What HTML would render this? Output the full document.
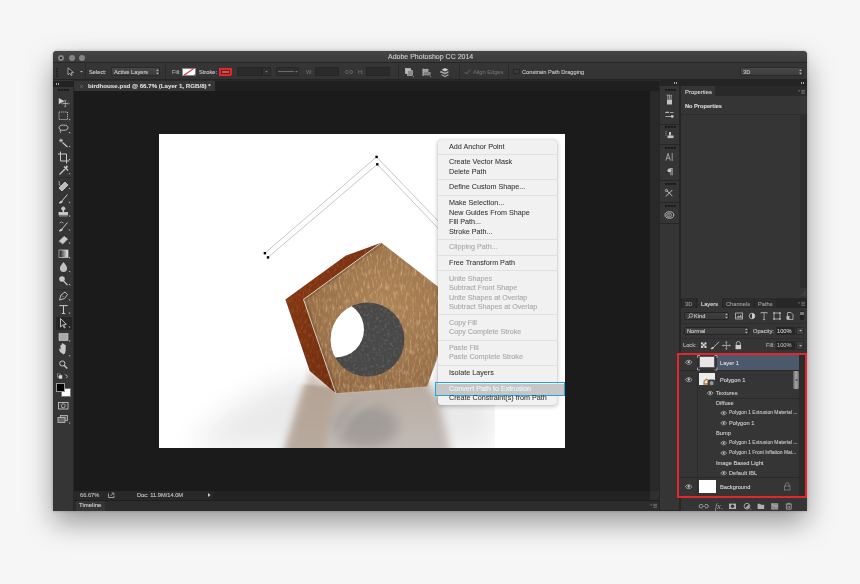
<!DOCTYPE html>
<html><head><meta charset="utf-8">
<style>
*{margin:0;padding:0;box-sizing:border-box}
html,body{width:860px;height:584px;overflow:hidden;background:#f6f6f6;font-family:"Liberation Sans",sans-serif}
.a{position:absolute}
.t{position:absolute;white-space:nowrap;color:#c4c4c4;font-size:5.7px;line-height:8px;-webkit-text-stroke:0.12px currentColor;will-change:transform}
svg{position:absolute;overflow:visible}
</style></head>
<body>
<!-- window shadow + base -->
<div class="a" style="left:53px;top:51px;width:754px;height:459.6px;background:#2b2b2b;border-radius:4px 4px 0 0;box-shadow:0 12px 28px rgba(0,0,0,.38),0 0 3px rgba(0,0,0,.25)"></div>

<!-- TITLE BAR -->
<div class="a" style="left:53px;top:51px;width:754px;height:11px;background:linear-gradient(#464646,#3b3b3b);border-radius:4px 4px 0 0"></div>
<div class="a" style="left:58px;top:55px;width:6.4px;height:6.4px;border-radius:50%;background:#858585"></div>
<div class="a" style="left:60.3px;top:57.3px;width:1.7px;height:1.7px;border-radius:50%;background:#2a2a2a"></div>
<div class="a" style="left:68.5px;top:55px;width:6.4px;height:6.4px;border-radius:50%;background:#858585"></div>
<div class="a" style="left:79px;top:55px;width:6.4px;height:6.4px;border-radius:50%;background:#858585"></div>
<div class="t" style="left:387.5px;top:53.3px;font-size:7px;color:#cdcdcd">Adobe Photoshop CC 2014</div>

<!-- OPTIONS BAR -->
<div class="a" style="left:53px;top:62px;width:754px;height:18px;background:linear-gradient(#363636,#333333);border-top:1px solid #262626;border-bottom:1px solid #242424"></div>


<!-- options bar content -->
<svg style="left:55.8px;top:68px" width="2" height="9"><path d="M0 0h1.6v1.6h-1.6zM0 2.6h1.6v1.6h-1.6zM0 5.2h1.6v1.6h-1.6zM0 7.8h1.6v1.4h-1.6z" fill="#1c1c1c"/></svg>
<svg style="left:67px;top:67px" width="8" height="9" viewBox="0 0 8 9"><path d="M1 0.8 L1 7.8 L2.8 6.2 L4.2 8.6 L5.2 8 L4 5.8 L6.6 5.6 Z" fill="#222" stroke="#bdbdbd" stroke-width="0.8"/></svg>
<svg style="left:79.5px;top:70.8px" width="3" height="2"><path d="M0 0 H3 L1.5 1.6Z" fill="#b0b0b0"/></svg>
<div class="a" style="left:85px;top:64px;width:1px;height:15px;background:#2a2a2a"></div>
<div class="t" style="left:89.3px;top:67.5px;color:#cdcdcd">Select:</div>
<div class="a" style="left:110.7px;top:67px;width:49.5px;height:9px;background:linear-gradient(#474747,#3d3d3d);border:1px solid #2a2a2a;border-radius:1.5px"></div>
<div class="t" style="left:113.8px;top:67.5px;color:#c8c8c8">Active Layers</div>
<svg style="left:156px;top:69px" width="3" height="6"><path d="M0 2 L1.5 0.4 L3 2Z M0 3.8 L1.5 5.4 L3 3.8Z" fill="#b8b8b8"/></svg>
<div class="a" style="left:165px;top:64px;width:1px;height:15px;background:#2a2a2a"></div>
<div class="t" style="left:171.7px;top:67.5px;color:#a8a8a8">Fill:</div>
<div class="a" style="left:182px;top:67.8px;width:13.6px;height:7.8px;background:#fff;border:0.6px solid #888"></div>
<svg style="left:182px;top:67.8px" width="14" height="8"><path d="M2 7.2 L11.6 0.6" stroke="#e0262a" stroke-width="1.1"/><path d="M13.6 5.6 V7.8 H11.4Z" fill="#555"/></svg>
<div class="t" style="left:199px;top:67.5px;color:#c8c8c8">Stroke:</div>
<div class="a" style="left:219.4px;top:67.6px;width:12.8px;height:8px;background:#e3262b"></div>
<div class="a" style="left:221.2px;top:70px;width:8.8px;height:4px;border:0.9px solid #4a2a2a;background:#e84a4e"></div><svg style="left:229.5px;top:73.5px" width="3" height="2.5"><path d="M0 2.5 L3 2.5 L3 0Z" fill="#333"/></svg>
<div class="a" style="left:236.6px;top:67.2px;width:25.6px;height:8.7px;background:#2b2b2b;border:0.8px solid #262626"></div>
<div class="a" style="left:262.2px;top:67.2px;width:8.8px;height:8.7px;background:#303030;border:0.8px solid #262626"></div>
<svg style="left:265.3px;top:70.8px" width="3" height="2"><path d="M0 0 H3 L1.5 1.6Z" fill="#777"/></svg>
<div class="a" style="left:275.5px;top:67.2px;width:23.5px;height:8.7px;background:#2f2f2f;border:0.8px solid #282828"></div>
<div class="a" style="left:277.5px;top:71.3px;width:16px;height:0.8px;background:#6a6a6a"></div>
<svg style="left:294.5px;top:70.8px" width="3" height="2"><path d="M0 0 H3 L1.5 1.6Z" fill="#777"/></svg>
<div class="t" style="left:305.5px;top:67.5px;color:#6e6e6e">W:</div>
<div class="a" style="left:315px;top:67.2px;width:23.7px;height:8.7px;background:#2b2b2b;border:0.8px solid #262626"></div>
<svg style="left:344.5px;top:69.5px" width="8" height="4"><path d="M3 0.5 H2 A1.5 1.5 0 0 0 2 3.5 H3 M5 0.5 H6 A1.5 1.5 0 0 1 6 3.5 H5 M2.5 2 H5.5" fill="none" stroke="#6e6e6e" stroke-width="0.8"/></svg>
<div class="t" style="left:357.9px;top:67.5px;color:#6e6e6e">H:</div>
<div class="a" style="left:365.6px;top:67.2px;width:24.3px;height:8.7px;background:#2b2b2b;border:0.8px solid #262626"></div>
<div class="a" style="left:397.6px;top:64px;width:1px;height:15px;background:#2a2a2a"></div>
<svg style="left:405px;top:68px" width="9" height="10"><rect x="0.5" y="0.5" width="5" height="5" fill="#bbb" stroke="#ddd" stroke-width=".5"/><rect x="2.5" y="2.5" width="5" height="5" fill="#888" stroke="#ccc" stroke-width=".5"/><path d="M8 8.6h1" stroke="#aaa" stroke-width=".8"/></svg>
<svg style="left:422px;top:68px" width="9" height="10"><path d="M1 0.5 V8" stroke="#bbb" stroke-width=".9"/><rect x="1.6" y="1.2" width="4.5" height="2.4" fill="#999" stroke="#ccc" stroke-width=".5"/><rect x="1.6" y="4.6" width="6.5" height="2.4" fill="#777" stroke="#bbb" stroke-width=".5"/><path d="M8 8.6h1" stroke="#aaa" stroke-width=".8"/></svg>
<svg style="left:439.5px;top:67.3px" width="10" height="11"><path d="M5 1 L8.5 2.8 L5 4.6 L1.5 2.8Z" fill="#ccc"/><path d="M1.5 4 L5 5.8 L8.5 4 V5.8 L5 7.6 L1.5 5.8Z" fill="#aaa"/><path d="M1.5 7 L5 8.8 L8.5 7 V8.4 L5 10.2 L1.5 8.4Z" fill="#999"/><path d="M0 5 H2 M1 4 V6" stroke="#bbb" stroke-width=".7"/></svg>
<div class="a" style="left:459.2px;top:64px;width:1px;height:15px;background:#2a2a2a"></div>
<svg style="left:464px;top:68.5px" width="7" height="6"><path d="M0.8 3 L2.6 5 L6.2 0.6" fill="none" stroke="#6a6a6a" stroke-width="1"/></svg>
<div class="t" style="left:473.3px;top:67.5px;color:#6c6c6c">Align Edges</div>
<div class="a" style="left:507.8px;top:64px;width:1px;height:15px;background:#2a2a2a"></div>
<div class="a" style="left:512.8px;top:68.7px;width:7px;height:5.8px;background:#3a3a3a;border:0.7px solid #262626;border-radius:1px"></div>
<div class="t" style="left:522.4px;top:67.5px;color:#c4c4c4">Constrain Path Dragging</div>
<div class="a" style="left:740px;top:67px;width:63px;height:9px;background:linear-gradient(#474747,#3d3d3d);border:1px solid #2a2a2a;border-radius:1.5px"></div>
<div class="t" style="left:742.9px;top:67.5px;color:#c8c8c8">3D</div>
<svg style="left:798.5px;top:69px" width="3" height="6"><path d="M0 2 L1.5 0.4 L3 2Z M0 3.8 L1.5 5.4 L3 3.8Z" fill="#b8b8b8"/></svg>

<!-- DOC TAB ROW -->
<div class="a" style="left:74px;top:80px;width:585px;height:11px;background:#1f1f1f;border-top:1px solid #2a2a2a"></div>
<div class="a" style="left:74px;top:80.5px;width:141px;height:10.5px;background:#363636"></div>
<svg style="left:80px;top:84.6px" width="3" height="3"><path d="M0.3 0.3 L2.7 2.7 M2.7 0.3 L0.3 2.7" stroke="#8a8a8a" stroke-width=".6"/></svg>
<div class="t" style="left:87.7px;top:81.6px;font-size:6.15px;font-weight:bold;color:#dcdcdc">birdhouse.psd @ 66.7% (Layer 1, RGB/8) *</div>

<!-- LEFT TOOLBAR -->
<div class="a" style="left:53px;top:80px;width:20.5px;height:430.6px;background:#353535;border-right:1px solid #262626"></div>
<div class="a" style="left:53px;top:81px;width:20.5px;height:6px;background:#222"></div>
<div class="a" style="left:55.8px;top:83px;width:1.3px;height:2.2px;background:#a8a8a8;box-shadow:2px 0 0 #a8a8a8"></div>
<svg style="left:58.0px;top:88.8px" width="11" height="2"><path d="M0 0h2.3v1.7h-2.3zM2.9 0h2.3v1.7h-2.3zM5.8 0h2.3v1.7h-2.3zM8.7 0h2.3v1.7h-2.3z" fill="#171717"/></svg>
<div class="a" style="left:55.9px;top:317px;width:15.7px;height:12.5px;background:#262626;border-radius:1px"></div>
<div class="a" style="left:55px;top:177px;width:17px;height:0.8px;background:#2a2a2a"></div>
<div class="a" style="left:55px;top:288.6px;width:17px;height:0.8px;background:#2a2a2a"></div>
<svg style="left:53px;top:80px" width="21" height="350" viewBox="0 0 21 350" fill="none" stroke="#c8c8c8" stroke-width="0.9">
 <!-- move 101.9 -->
 <path d="M5.8 18 L5.8 24.5 L7.6 23 L11.5 21.3 Z" fill="#cfcfcf" stroke="none"/><path d="M9.5 23.5 h5.6 M12.3 20.8 v5.6" stroke-width=".7"/><path d="M9.6 22.5 l-1 1 l1 1 M15 22.5 l1 1 l-1 1 M11.3 20.9 l1 -1 l1 1 M11.3 26.1 l1 1 l1 -1" stroke-width=".6"/>
 <!-- marquee 115.8 -->
 <rect x="6" y="32" width="8.5" height="7.5" stroke-dasharray="1.2 .9"/>
 <!-- lasso 128.9 -->
 <ellipse cx="10.5" cy="47.7" rx="4.5" ry="2.6"/><path d="M7.5 50 q-1 1.5 .3 2.8"/>
 <!-- wand 142.8 -->
 <path d="M9.5 62.5 L14.5 67" stroke-width="1.2"/><path d="M8 58.5 v4 M6 60.5 h4 M6.6 59 l2.8 3 M9.4 59 l-2.8 3" stroke-width=".7"/>
 <!-- crop 155.9 -->
 <path d="M7.5 71.5 V81 H16 M5 74 H13.5 V83.5" stroke-width="1"/>
 <!-- eyedropper 170 -->
 <path d="M6.5 94.5 L12 89 M11 86.5 L15 90.5" stroke-width="1.3"/><path d="M12.5 88 l2 -2" stroke-width="1.8"/>
 <!-- healing 184.7 -->
 <path d="M6 108 l6 -6 l3 3 l-6 6 z" fill="#bbb" stroke="#ccc"/><path d="M6.2 101 v4 l1.5 .5" stroke-width=".7"/>
 <!-- brush 198.6 -->
 <path d="M8.5 121.5 L14.5 114.5" stroke-width="1"/><path d="M6 123 q1.5 -2.5 3.5 -1.5 q-.5 2 -3.5 1.5z" fill="#ccc"/>
 <!-- stamp 212.4 -->
 <circle cx="10.3" cy="128.6" r="1.7" fill="#ccc"/><path d="M10.3 130 v2.5" stroke-width="1.4"/><rect x="6" y="132.5" width="8.6" height="2.3" fill="#ccc"/><path d="M6 136 h8.6" stroke-width=".6"/>
 <!-- history brush 226.3 -->
 <path d="M8.5 149.5 L14.5 142.5" stroke-width="1"/><path d="M6 151 q1.5 -2.5 3.5 -1.5 q-.5 2 -3.5 1.5z" fill="#ccc"/><path d="M6.5 143 q2 -2 4 0" stroke-width=".7"/>
 <!-- eraser 239.4 -->
 <path d="M6 161.5 l5 -5 l3.5 2.5 l-5 5 z" fill="#ccc"/><path d="M6 161.5 l3.5 2.5" stroke="#555"/>
 <!-- gradient 253.9 -->
 <rect x="6" y="170" width="9" height="7.5" fill="url(#grd)" stroke="#ccc" stroke-width=".7"/>
 <!-- blur 267.8 -->
 <path d="M10.5 182 q-4 5 -3.6 6.3 a3.6 3.6 0 0 0 7.2 0 q.4 -1.3 -3.6 -6.3z" fill="#c0c0c0" stroke="none"/>
 <!-- dodge 280.9 -->
 <circle cx="9" cy="199" r="2.8" fill="#c8c8c8" stroke="none"/><path d="M10.5 201 L14.5 205" stroke-width="1.1"/>
 <!-- pen 296.3 -->
 <path d="M6.5 220 L8 215 L12 212 L14.5 214.5 L11.5 218.5 Z" stroke-width=".9"/><path d="M9 215.5 l1.5 1.5" stroke-width=".6"/>
 <!-- type 309.4 -->
 <path d="M6.3 225.6 H14.7 M10.5 225.6 V233.5 M8.8 233.5 h3.4" stroke-width="1"/>
 <!-- path select 323.3 -->
 <path d="M7.5 238.5 V247 L9.6 245 L11.4 248 L12.2 247.5 L10.6 244.6 L13.4 244.3 Z" fill="#2a2a2a" stroke-width=".9"/>
 <!-- rect 337.3 -->
 <rect x="6" y="253.5" width="9" height="7" fill="#aaa" stroke="#d0d0d0" stroke-width=".6"/>
 <!-- hand 352 -->
 <path d="M7 272 q-1.5 -3 -.5 -4 l1 2 v-5 q1 -.7 1.3 0 v3.5 v-5 q1 -.7 1.3 0 v5 v-4.5 q1 -.7 1.3 0 v4.5 v-3.5 q1 -.7 1.3 0 v5 q0 3 -2 4.5 z" fill="#c8c8c8" stroke="none"/>
 <!-- zoom 365.1 -->
 <circle cx="9.3" cy="283.5" r="2.6" stroke-width="1"/><path d="M11.2 285.4 L14.3 288.5" stroke-width="1.4"/>
 <!-- default/swap 375.9 -->
 <rect x="4.5" y="294" width="3" height="3" fill="#111" stroke="#ccc" stroke-width=".5"/><rect x="6" y="295.5" width="3" height="3" fill="#ddd" stroke="#ccc" stroke-width=".5"/>
 <path d="M12 294.5 l1 1 M13 298 l1 -1 M12.5 294.8 q2 0 2 2.5" stroke-width=".6"/>
</svg>
<svg style="left:67px;top:100px" width="5" height="330"><path d="M1.5 19.0 l1.6 0 l0 1.6z" fill="#bdbdbd"/><path d="M1.5 32.1 l1.6 0 l0 1.6z" fill="#bdbdbd"/><path d="M1.5 46.0 l1.6 0 l0 1.6z" fill="#bdbdbd"/><path d="M1.5 59.1 l1.6 0 l0 1.6z" fill="#bdbdbd"/><path d="M1.5 73.2 l1.6 0 l0 1.6z" fill="#bdbdbd"/><path d="M1.5 87.9 l1.6 0 l0 1.6z" fill="#bdbdbd"/><path d="M1.5 101.8 l1.6 0 l0 1.6z" fill="#bdbdbd"/><path d="M1.5 115.6 l1.6 0 l0 1.6z" fill="#bdbdbd"/><path d="M1.5 129.5 l1.6 0 l0 1.6z" fill="#bdbdbd"/><path d="M1.5 142.6 l1.6 0 l0 1.6z" fill="#bdbdbd"/><path d="M1.5 157.1 l1.6 0 l0 1.6z" fill="#bdbdbd"/><path d="M1.5 171.0 l1.6 0 l0 1.6z" fill="#bdbdbd"/><path d="M1.5 184.1 l1.6 0 l0 1.6z" fill="#bdbdbd"/><path d="M1.5 199.5 l1.6 0 l0 1.6z" fill="#bdbdbd"/><path d="M1.5 212.6 l1.6 0 l0 1.6z" fill="#bdbdbd"/><path d="M1.5 226.5 l1.6 0 l0 1.6z" fill="#bdbdbd"/><path d="M1.5 240.5 l1.6 0 l0 1.6z" fill="#bdbdbd"/><path d="M1.5 255.2 l1.6 0 l0 1.6z" fill="#bdbdbd"/><path d="M1.5 322.5 l1.6 0 l0 1.6z" fill="#bdbdbd"/></svg>
<svg width="0" height="0"><defs><linearGradient id="grd"><stop offset="0" stop-color="#111"/><stop offset="1" stop-color="#eee"/></linearGradient></defs></svg>
<div class="a" style="left:60.9px;top:387.7px;width:10px;height:9.4px;background:#fff;border:0.7px solid #777"></div>
<div class="a" style="left:56px;top:382.6px;width:9.4px;height:9px;background:#000;border:0.8px solid #999"></div>
<svg style="left:53px;top:398px" width="21" height="30" fill="none" stroke="#c0c0c0">
 <rect x="5.5" y="4.5" width="9.5" height="6.5" stroke-width=".9" fill="#3a3a3a"/><circle cx="10.25" cy="7.75" r="2" stroke-width=".8"/>
 <rect x="7.5" y="17.5" width="7" height="5" stroke-width=".8" fill="#555"/><rect x="5" y="19.5" width="7" height="5" stroke-width=".8" fill="#666"/>
</svg>

<!-- CANVAS AREA -->
<div class="a" style="left:74px;top:91px;width:576px;height:400px;background:#1b1b1b"></div>
<div class="a" style="left:650px;top:91px;width:8.5px;height:400px;background:#292929"></div>

<!-- STATUS + TIMELINE -->
<div class="a" style="left:650px;top:491px;width:8.5px;height:8.5px;background:#2f2f2f"></div>
<div class="a" style="left:74px;top:491px;width:576px;height:8.5px;background:#232323"></div>
<div class="a" style="left:74px;top:491px;width:139px;height:8.5px;background:#282828"></div>
<div class="t" style="left:80.2px;top:491.2px;color:#bdbdbd">66.67%</div>
<svg style="left:107.5px;top:492.3px" width="7" height="6"><path d="M0.5 1.5 V5.5 H6 V3.5" fill="none" stroke="#bbb" stroke-width=".8"/><path d="M2.5 4 L5.5 1 M3.8 1 H5.8 V3" fill="none" stroke="#bbb" stroke-width=".7"/></svg>
<div class="t" style="left:137.2px;top:491.2px;color:#c4c4c4">Doc: 11.9M/14.0M</div>
<svg style="left:208px;top:493px" width="3" height="4"><path d="M0 0 L2.5 2 L0 4Z" fill="#ccc"/></svg>
<div class="a" style="left:74px;top:499.5px;width:585px;height:2px;background:#1e1e1e"></div>
<div class="a" style="left:74px;top:501px;width:585px;height:9.6px;background:#2c2c2c"></div>
<div class="a" style="left:75.6px;top:501px;width:29px;height:9.6px;background:#353535"></div>
<div class="t" style="left:79px;top:501.4px;font-size:6px;color:#cfcfcf">Timeline</div>
<svg style="left:650px;top:502.5px" width="8" height="6"><path d="M0 1.6 H2.2 L1.1 2.8Z" fill="#8a8a8a"/><path d="M3.2 1.3 H7 M3.2 2.8 H7 M3.2 4.3 H7" stroke="#7a7a7a" stroke-width=".8"/></svg>

<!-- DOCK COLUMN -->
<div class="a" style="left:658.5px;top:80px;width:22px;height:430.6px;background:#262626"></div>
<div class="a" style="left:659.6px;top:86px;width:19.9px;height:424px;background:#353535"></div>
<div class="a" style="left:659.6px;top:80px;width:147.4px;height:6.4px;background:#242424"></div>
<div class="a" style="left:674px;top:82.3px;width:1.3px;height:2.2px;background:#a8a8a8;box-shadow:2px 0 0 #a8a8a8"></div>
<div class="a" style="left:800.5px;top:82.3px;width:1.3px;height:2.2px;background:#a8a8a8;box-shadow:2px 0 0 #a8a8a8"></div>
<div class="a" style="left:659.6px;top:123.6px;width:19.9px;height:0.8px;background:#262626"></div>
<div class="a" style="left:659.6px;top:144px;width:19.9px;height:0.8px;background:#262626"></div>
<div class="a" style="left:659.6px;top:180px;width:19.9px;height:0.8px;background:#262626"></div>
<div class="a" style="left:659.6px;top:202px;width:19.9px;height:0.8px;background:#262626"></div>
<div class="a" style="left:659.6px;top:223px;width:19.9px;height:0.8px;background:#262626"></div>
<svg style="left:664.5px;top:89.0px" width="11" height="2"><path d="M0 0h2.3v1.7h-2.3zM2.9 0h2.3v1.7h-2.3zM5.8 0h2.3v1.7h-2.3zM8.7 0h2.3v1.7h-2.3z" fill="#171717"/></svg>
<svg style="left:664.5px;top:125.5px" width="11" height="2"><path d="M0 0h2.3v1.7h-2.3zM2.9 0h2.3v1.7h-2.3zM5.8 0h2.3v1.7h-2.3zM8.7 0h2.3v1.7h-2.3z" fill="#171717"/></svg>
<svg style="left:664.5px;top:146.6px" width="11" height="2"><path d="M0 0h2.3v1.7h-2.3zM2.9 0h2.3v1.7h-2.3zM5.8 0h2.3v1.7h-2.3zM8.7 0h2.3v1.7h-2.3z" fill="#171717"/></svg>
<svg style="left:664.5px;top:182.5px" width="11" height="2"><path d="M0 0h2.3v1.7h-2.3zM2.9 0h2.3v1.7h-2.3zM5.8 0h2.3v1.7h-2.3zM8.7 0h2.3v1.7h-2.3z" fill="#171717"/></svg>
<svg style="left:664.5px;top:204.6px" width="11" height="2"><path d="M0 0h2.3v1.7h-2.3zM2.9 0h2.3v1.7h-2.3zM5.8 0h2.3v1.7h-2.3zM8.7 0h2.3v1.7h-2.3z" fill="#171717"/></svg>
<svg style="left:659px;top:80px" width="21" height="150" fill="none" stroke="#c2c2c2">
 <rect x="8" y="19.5" width="5" height="5" fill="#c2c2c2" stroke="none"/><path d="M8.8 19 v-4 M10.5 19 v-4.5 M12.2 19 v-3.6" stroke-width=".7"/><path d="M7.8 15.8 l1 -1.3 l1 1.3 M11.4 15.6 l1.6 -.6" stroke-width=".6"/>
 <path d="M6.5 32.5 h3.5 M11 32.5 h3.5 M6.5 36.5 h5.5" stroke-width=".8"/><circle cx="13.2" cy="36.5" r="1.4" fill="#c2c2c2" stroke="none"/><path d="M6.5 32.5 q1.8 -1 3.5 0" stroke-width=".9"/>
 <path d="M6.5 51.6 h1 M6.5 53.4 h1 M6.5 55.2 h1" stroke-width=".7"/><rect x="10" y="52" width="2" height="3.5" fill="#c2c2c2" stroke="none"/><rect x="8.5" y="55.5" width="6" height="2.6" fill="#c2c2c2" stroke="none"/>
 <path d="M6.8 80.5 L9.1 73.5 L11.4 80.5 M7.6 78.2 h3" stroke-width=".75"/><path d="M13.2 73 v8" stroke-width=".7"/>
 <path d="M10.8 88.5 h2.8 M11.8 88.5 v6.8 M13.2 88.5 v6.8" stroke-width=".75"/><circle cx="10.4" cy="90.4" r="1.9" fill="#c2c2c2" stroke="none"/>
 <path d="M6.8 116.5 L13.3 110 M7.5 110.3 L13.3 116" stroke-width="1"/><circle cx="7.4" cy="110.5" r="1.2" stroke-width=".7"/>
 <ellipse cx="10.4" cy="135" rx="4.4" ry="3.2" stroke-width=".9"/><ellipse cx="10.1" cy="135.2" rx="2.7" ry="1.9" stroke-width=".6"/><ellipse cx="9.9" cy="135.3" rx="1.3" ry=".9" stroke-width=".5"/>
</svg>

<!-- RIGHT PANELS -->
<div class="a" style="left:681px;top:86.4px;width:126px;height:211.4px;background:#353535"></div>
<div class="a" style="left:681px;top:86.4px;width:126px;height:9.8px;background:#292929"></div>
<div class="a" style="left:681px;top:86.4px;width:34px;height:9.8px;background:#353535"></div>
<div class="t" style="left:684.9px;top:88.2px;font-size:5.9px;color:#d4d4d4">Properties</div>
<svg style="left:798px;top:88.5px" width="8" height="6"><path d="M0 1.6 H2.2 L1.1 2.8Z" fill="#8a8a8a"/><path d="M3.2 1.3 H7 M3.2 2.8 H7 M3.2 4.3 H7" stroke="#7a7a7a" stroke-width=".8"/></svg>
<div class="t" style="left:684.9px;top:101.7px;font-weight:bold;font-size:5.65px;color:#d8d8d8">No Properties</div>
<div class="a" style="left:681px;top:113.6px;width:126px;height:0.8px;background:#2c2c2c"></div>
<div class="a" style="left:799.5px;top:114px;width:7.5px;height:174px;background:#2c2c2c"></div>
<svg style="left:800px;top:290px" width="7" height="7"><path d="M1 6 L6 1 M3.5 6 L6 3.5" stroke="#555" stroke-width=".7"/></svg>

<div class="a" style="left:681px;top:297.8px;width:126px;height:212.8px;background:#353535"></div>
<div class="a" style="left:681px;top:297.8px;width:126px;height:10.1px;background:#272727"></div>
<div class="a" style="left:681.5px;top:297.8px;width:14.8px;height:10.1px;background:#2c2c2c"></div>
<div class="a" style="left:697.5px;top:297.8px;width:24px;height:10.1px;background:#353535"></div>
<div class="a" style="left:722.7px;top:297.8px;width:30.4px;height:10.1px;background:#2c2c2c"></div>
<div class="a" style="left:754.7px;top:297.8px;width:21px;height:10.1px;background:#2c2c2c"></div>
<div class="t" style="left:685px;top:300px;color:#9a9a9a">3D</div>
<div class="t" style="left:700.9px;top:300px;color:#dadada">Layers</div>
<div class="t" style="left:725.5px;top:300px;color:#9e9e9e">Channels</div>
<div class="t" style="left:757.8px;top:300px;color:#9e9e9e">Paths</div>
<svg style="left:798px;top:301.3px" width="8" height="6"><path d="M0 1.6 H2.2 L1.1 2.8Z" fill="#8a8a8a"/><path d="M3.2 1.3 H7 M3.2 2.8 H7 M3.2 4.3 H7" stroke="#7a7a7a" stroke-width=".8"/></svg>

<!-- kind row -->
<div class="a" style="left:683.7px;top:311.7px;width:45.5px;height:8.5px;background:linear-gradient(#3f3f3f,#393939);border:0.8px solid #252525;border-radius:1.5px"></div>
<svg style="left:686.5px;top:313.2px" width="6" height="6"><circle cx="4" cy="2.5" r="1.8" fill="none" stroke="#c8c8c8" stroke-width=".7"/><path d="M2.7 3.8 L0.9 5.6" stroke="#c8c8c8" stroke-width=".9"/></svg>
<div class="t" style="left:694.4px;top:312px;color:#cacaca">Kind</div>
<svg style="left:724.5px;top:313.3px" width="3" height="6"><path d="M0 2 L1.5 0.4 L3 2Z M0 3.8 L1.5 5.4 L3 3.8Z" fill="#b0b0b0"/></svg>
<svg style="left:734px;top:311px" width="70" height="10" fill="none" stroke="#bdbdbd">
 <rect x="1.6" y="2" width="7" height="6" stroke-width=".8"/><path d="M2.8 6.8 l1.5 -2 l1 1 l1.5 -1.6 l1 2.6" stroke-width=".6" fill="#999"/>
 <circle cx="18" cy="5" r="2.8" stroke-width=".8"/><path d="M18 2.2 a2.8 2.8 0 0 1 0 5.6z" fill="#ccc" stroke="none"/>
 <path d="M27 1.6 h6.2 M30.1 1.6 v7 M29 8.6 h2.2 M27 1.6 v1 M33.2 1.6 v1" stroke-width=".8"/>
 <rect x="40" y="2" width="6" height="6" stroke-width=".8"/><rect x="39.3" y="1.3" width="1.4" height="1.4" fill="#ccc" stroke="none"/><rect x="45.3" y="1.3" width="1.4" height="1.4" fill="#ccc" stroke="none"/><rect x="39.3" y="7.3" width="1.4" height="1.4" fill="#ccc" stroke="none"/><rect x="45.3" y="7.3" width="1.4" height="1.4" fill="#ccc" stroke="none"/>
 <path d="M53.5 1.5 h3.5 l2 2 v5 h-5.5z" stroke-width=".8"/><rect x="52.5" y="5" width="3" height="3.5" fill="#bbb" stroke="none"/>
</svg>
<div class="a" style="left:799.8px;top:311.4px;width:4.6px;height:8.6px;background:#222;border-radius:1px"></div>
<div class="a" style="left:800.2px;top:311.8px;width:3.8px;height:3.2px;background:#777;border-radius:.5px"></div>
<div class="a" style="left:681px;top:323.3px;width:126px;height:0.7px;background:#2e2e2e"></div>

<!-- normal row -->
<div class="a" style="left:683.7px;top:326.8px;width:65.8px;height:8.4px;background:linear-gradient(#3f3f3f,#393939);border:0.8px solid #252525;border-radius:1.5px"></div>
<div class="t" style="left:686.5px;top:327px;color:#cacaca">Normal</div>
<svg style="left:745.3px;top:328.3px" width="3" height="6"><path d="M0 2 L1.5 0.4 L3 2Z M0 3.8 L1.5 5.4 L3 3.8Z" fill="#b0b0b0"/></svg>
<div class="t" style="left:752.8px;top:327px;color:#c4c4c4">Opacity:</div>
<div class="a" style="left:775.7px;top:326.6px;width:19.5px;height:8.6px;background:#272727"></div>
<div class="t" style="left:777.3px;top:327px;color:#c4c4c4">100%</div>
<div class="a" style="left:796px;top:326.6px;width:8.1px;height:8.6px;background:#3e3e3e;border:0.6px solid #2a2a2a"></div>
<svg style="left:798.6px;top:330.2px" width="3" height="2"><path d="M0 0 H3 L1.5 1.6Z" fill="#bbb"/></svg>
<div class="a" style="left:681px;top:338.2px;width:126px;height:0.7px;background:#2e2e2e"></div>

<!-- lock row -->
<div class="t" style="left:683px;top:341.3px;color:#b8b8b8">Lock:</div>
<svg style="left:699px;top:340px" width="45" height="11" fill="none" stroke="#c4c4c4">
 <rect x="2" y="2.5" width="5.4" height="5.4" fill="#666" stroke="none"/><path d="M2 2.5 h1.8 v1.8 h-1.8z M5.6 2.5 h1.8 v1.8 h-1.8z M3.8 4.3 h1.8 v1.8 h-1.8z M2 6.1 h1.8 v1.8 h-1.8z M5.6 6.1 h1.8 v1.8 h-1.8z" fill="#ddd" stroke="none"/>
 <path d="M14 7.8 L20 1.8" stroke-width=".9"/><path d="M12 8.8 q1 -2 2.6 -1.3 q-.2 1.6 -2.6 1.3z" fill="#ccc"/>
 <path d="M27.3 1.5 v8 M23.3 5.5 h8" stroke-width=".7"/><path d="M26.3 2.5 l1 -1 l1 1 M26.3 8.5 l1 1 l1 -1 M24.3 4.5 l-1 1 l1 1 M30.3 4.5 l1 1 l-1 1" stroke-width=".6"/>
 <path d="M37.3 5 v-1.5 a2 2 0 0 1 4 0 v1.5" stroke-width=".8"/><rect x="36.5" y="5" width="5.6" height="4.2" fill="#ccc" stroke="none"/>
</svg>
<div class="t" style="left:765.6px;top:341.3px;color:#a8a8a8">Fill:</div>
<div class="a" style="left:775.7px;top:340.8px;width:19.5px;height:8.8px;background:#272727"></div>
<div class="t" style="left:777.3px;top:341.3px;color:#aaaaaa">100%</div>
<div class="a" style="left:796px;top:340.8px;width:8.1px;height:8.8px;background:#3e3e3e;border:0.6px solid #2a2a2a"></div>
<svg style="left:798.6px;top:344.6px" width="3" height="2"><path d="M0 0 H3 L1.5 1.6Z" fill="#bbb"/></svg>

<!-- layers list -->
<div class="a" style="left:679px;top:355px;width:120px;height:140.5px;background:#353535"></div>
<div class="a" style="left:717px;top:355px;width:82.4px;height:15.2px;background:#4c586b"></div>
<div class="a" style="left:696.5px;top:355px;width:0.7px;height:140.5px;background:#2c2c2c"></div>
<div class="a" style="left:679px;top:370.2px;width:120px;height:0.7px;background:#2a2a2a"></div>
<div class="a" style="left:679px;top:477.2px;width:120px;height:0.7px;background:#2a2a2a"></div>
<div class="a" style="left:714px;top:398.2px;width:85px;height:0.6px;background:#2a2a2a"></div>
<div class="a" style="left:799.4px;top:355px;width:6px;height:140.5px;background:#2b2b2b"></div>
<div class="a" style="left:793px;top:371px;width:6.4px;height:17.6px;background:linear-gradient(90deg,#5a5a5a,#aaa 50%,#6a6a6a);border-radius:1px"></div>
<svg style="left:795px;top:378.6px" width="3" height="2"><path d="M0 1.6 H3 L1.5 0Z" fill="#333"/></svg>

<!-- thumbnails -->
<div class="a" style="left:699px;top:355.7px;width:16px;height:12.5px;background:#e6e6e6;border:0.5px solid #5a5a5a"></div>
<svg style="left:697px;top:354.5px" width="21" height="16"><path d="M0.5 3V0.5H3 M17.5 0.5H20V3 M0.5 12.5V15H3 M17.5 15H20V12.5" fill="none" stroke="#c8ccd4" stroke-width=".7"/></svg>
<div class="a" style="left:699px;top:372.7px;width:16px;height:12.7px;background:#ececec"></div>
<svg style="left:699px;top:372.7px" width="17" height="14"><path d="M5 11 L5.2 8 L7.5 6.3 L9.5 7.5 L9 11Z" fill="none" stroke="#b8743a" stroke-width="1.3"/><rect x="8.8" y="6.5" width="7.5" height="7" rx="1.8" fill="#3a3a3a"/><path d="M10.8 8.8 l1.8 -.8 l1.8 .8 v2.6 l-1.8 .8 l-1.8 -.8z" fill="#9a9a9a"/></svg>
<div class="a" style="left:699px;top:479.9px;width:16.5px;height:12.7px;background:#ffffff"></div>

<svg style="left:679px;top:355px" width="120" height="142" fill="none" stroke="#bdbdbd" stroke-width=".6">
 <!-- eyes -->
 <path d="M6.30 7.3 Q9.7 3.10 13.10 7.3 Q9.7 11.50 6.30 7.3Z" stroke-width=".7"/><circle cx="9.7" cy="7.10" r="1.15" fill="#c8c8c8" stroke="none"/>
 <path d="M6.30 24.7 Q9.7 20.50 13.10 24.7 Q9.7 28.90 6.30 24.7Z" stroke-width=".7"/><circle cx="9.7" cy="24.50" r="1.15" fill="#c8c8c8" stroke="none"/>
 <path d="M28.20 38.1 Q31.2 34.50 34.20 38.1 Q31.2 41.70 28.20 38.1Z" stroke-width=".7"/><circle cx="31.2" cy="37.90" r="1.0" fill="#c8c8c8" stroke="none"/>
 <path d="M41.70 58.1 Q44.7 54.50 47.70 58.1 Q44.7 61.70 41.70 58.1Z" stroke-width=".7"/><circle cx="44.7" cy="57.90" r="1.0" fill="#c8c8c8" stroke="none"/>
 <path d="M41.70 68.1 Q44.7 64.50 47.70 68.1 Q44.7 71.70 41.70 68.1Z" stroke-width=".7"/><circle cx="44.7" cy="67.90" r="1.0" fill="#c8c8c8" stroke="none"/>
 <path d="M41.70 88.1 Q44.7 84.50 47.70 88.1 Q44.7 91.70 41.70 88.1Z" stroke-width=".7"/><circle cx="44.7" cy="87.90" r="1.0" fill="#c8c8c8" stroke="none"/>
 <path d="M41.70 98.1 Q44.7 94.50 47.70 98.1 Q44.7 101.70 41.70 98.1Z" stroke-width=".7"/><circle cx="44.7" cy="97.90" r="1.0" fill="#c8c8c8" stroke="none"/>
 <path d="M41.70 118.1 Q44.7 114.50 47.70 118.1 Q44.7 121.70 41.70 118.1Z" stroke-width=".7"/><circle cx="44.7" cy="117.90" r="1.0" fill="#c8c8c8" stroke="none"/>
 <path d="M6.30 131.7 Q9.7 127.50 13.10 131.7 Q9.7 135.90 6.30 131.7Z" stroke-width=".7"/><circle cx="9.7" cy="131.50" r="1.15" fill="#c8c8c8" stroke="none"/>
 <!-- lock -->
 <path d="M106.5 131 v-1.5 a1.8 1.8 0 0 1 3.6 0 v1.5" stroke="#999"/><rect x="105.6" y="131" width="5.4" height="4" fill="none" stroke="#999"/>
</svg>
<div class="t" style="left:719.6px;top:359px;color:#d8d8d8">Layer 1</div>
<div class="t" style="left:719.6px;top:376px;color:#d4d4d4">Polygon 1</div>
<div class="t" style="left:716px;top:389px;color:#cccccc">Textures</div>
<div class="t" style="left:716px;top:399px;color:#cccccc">Diffuse</div>
<div class="t" style="left:729.4px;top:409px;font-size:4.95px;color:#c0c0c0">Polygon 1 Extrusion Material ...</div>
<div class="t" style="left:729.4px;top:419px;color:#c8c8c8">Polygon 1</div>
<div class="t" style="left:716px;top:429px;color:#cccccc">Bump</div>
<div class="t" style="left:729.4px;top:439px;font-size:4.95px;color:#c0c0c0">Polygon 1 Extrusion Material ...</div>
<div class="t" style="left:729.4px;top:449px;font-size:4.95px;color:#c0c0c0">Polygon 1 Front Inflation Mat...</div>
<div class="t" style="left:716px;top:459px;color:#cccccc">Image Based Light</div>
<div class="t" style="left:729.4px;top:469px;color:#c8c8c8">Default IBL</div>
<div class="t" style="left:719.6px;top:483px;color:#d0d0d0">Background</div>

<!-- red border -->
<div class="a" style="left:677.3px;top:353.3px;width:129.4px;height:144.6px;border:2px solid #e3262b"></div>

<!-- bottom icons -->
<div class="a" style="left:681px;top:497.5px;width:126px;height:13.1px;background:#353535"></div>
<svg style="left:681px;top:500px" width="126" height="13" fill="none" stroke="#a8a8a8" stroke-width=".8">
 <path d="M21.5 4.5 h-1.6 a1.7 1.7 0 0 0 0 3.4 h1.6 M24 4.5 h1.6 a1.7 1.7 0 0 1 0 3.4 h-1.6 M21 6.2 h3.5" stroke-width=".9"/>
 <text x="34" y="9.2" font-family="Liberation Serif" font-style="italic" font-size="8" fill="#a8a8a8" stroke="none">fx</text><rect x="40.6" y="8.4" width=".9" height=".9" fill="#a8a8a8" stroke="none"/>
 <rect x="48" y="3.6" width="7" height="5.4" fill="#b0b0b0" stroke="none"/><circle cx="51.5" cy="6.3" r="1.7" fill="#353535" stroke="none"/>
 <circle cx="66" cy="6.2" r="2.9" stroke-width=".9"/><path d="M64 8.2 L68 4.2 A2.9 2.9 0 0 1 64 8.2z" fill="#a8a8a8" stroke="none"/><rect x="69.4" y="8.8" width=".9" height=".9" fill="#a8a8a8" stroke="none"/>
 <path d="M76.6 3.8 h2.6 l.8 .9 h3.2 v4.4 h-6.6z" fill="#b0b0b0" stroke="none"/>
 <path d="M90.6 3.6 h6.2 v5.6 h-6.2z" fill="#8a8a8a" stroke="#b0b0b0" stroke-width=".6"/><path d="M90.6 3.6 l2.4 2.4 h3.8" stroke="#d0d0d0" stroke-width=".6"/>
 <path d="M104.6 4.2 h6.4 M106.6 4.2 v-.9 h2.4 v.9 M105.4 4.6 v4.6 h4.8 v-4.6 M107 5.8 v2.4 M108.6 5.8 v2.4" stroke-width=".8"/>
</svg>
<!-- DOCUMENT -->
<div class="a" style="left:159px;top:134px;width:406px;height:313.5px;background:#ffffff;overflow:hidden">
<svg style="left:0;top:0" width="406" height="314" viewBox="0 0 406 314">
 <defs>
  <filter id="b6" x="-50%" y="-50%" width="200%" height="200%"><feGaussianBlur stdDeviation="6"/></filter>
  <filter id="b12" x="-50%" y="-50%" width="200%" height="200%"><feGaussianBlur stdDeviation="14"/></filter>
  <filter id="b3" x="-50%" y="-50%" width="200%" height="200%"><feGaussianBlur stdDeviation="3"/></filter>
  <linearGradient id="refl" x1="0" y1="0" x2="0" y2="1"><stop offset="0" stop-color="#b8aca2"/><stop offset="1" stop-color="#c2bbb6"/></linearGradient>
  <radialGradient id="front" cx="0.55" cy="0.4" r="0.75"><stop offset="0" stop-color="#b08557"/><stop offset="1" stop-color="#8d6440"/></radialGradient>
  <linearGradient id="side" x1="0" y1="0" x2="1" y2="1"><stop offset="0" stop-color="#8e3914"/><stop offset="1" stop-color="#66280d"/></linearGradient>
 </defs>
 <!-- render area floor shading -->
 <rect x="0" y="0" width="336" height="314" fill="#ffffff"/>
 <path d="M30 314 Q120 220 200 250 L336 240 L336 314Z" fill="#e9e9e9" filter="url(#b12)"/>
 <rect x="336" y="0" width="70" height="314" fill="#ffffff"/>
 <!-- reflection -->
 <filter id="bh" x="-30%" y="-30%" width="160%" height="160%"><feGaussianBlur stdDeviation="5 0.8"/></filter>
 <path d="M176.9 254 L268 247 L280 268 L292 318 L125 318 L146 250 Z" fill="url(#refl)" filter="url(#bh)"/>
 <path d="M176.9 257 L150.8 236.9 L125 318 L165 318 Z" fill="#b09a88" filter="url(#b3)" opacity=".5"/>
 <ellipse cx="207" cy="292" rx="32" ry="22" fill="#908d8b" filter="url(#b6)" opacity=".6"/>
 <path d="M182 300 Q188 276 214 268" fill="none" stroke="#d8d2cc" stroke-width="2.5" filter="url(#b3)" opacity=".6"/>
 <!-- side face -->
 <filter id="nl" x="0" y="0" width="100%" height="100%"><feTurbulence type="fractalNoise" baseFrequency="0.45 0.14" numOctaves="3" seed="7"/><feColorMatrix type="matrix" values="0 0 0 0 0.90  0 0 0 0 0.74  0 0 0 0 0.50  2.2 0 0 0 -1.05"/></filter><filter id="nd" x="0" y="0" width="100%" height="100%"><feTurbulence type="fractalNoise" baseFrequency="0.45 0.14" numOctaves="3" seed="21"/><feColorMatrix type="matrix" values="0 0 0 0 0.36  0 0 0 0 0.22  0 0 0 0 0.10  2.2 0 0 0 -1.05"/></filter><filter id="ns" x="0" y="0" width="100%" height="100%"><feTurbulence type="fractalNoise" baseFrequency="0.5 0.2" numOctaves="3" seed="11"/><feColorMatrix type="matrix" values="0 0 0 0 0.28  0 0 0 0 0.10  0 0 0 0 0.03  2.2 0 0 0 -1.0"/></filter><filter id="ng" x="0" y="0" width="100%" height="100%"><feTurbulence type="fractalNoise" baseFrequency="0.35" numOctaves="3" seed="4"/><feColorMatrix type="matrix" values="0 0 0 0 0.55  0 0 0 0 0.55  0 0 0 0 0.55  2 0 0 0 -0.95"/></filter>
 <clipPath id="cpf"><path d="M222.3 108.7 L298.2 167.5 L268 252.7 L176.9 259.6 L144.5 165.4 Z"/></clipPath>
 <clipPath id="cps"><path d="M222.3 108.7 L186.6 121.7 L126.4 165.4 L150.8 236.9 L177.2 259.6 L144.5 165.4 Z"/></clipPath>
 <clipPath id="cph"><circle cx="208.5" cy="205.5" r="37"/></clipPath>
 <path d="M222.3 108.7 L186.6 121.7 L126.4 165.4 L150.8 236.9 L177.2 259.6 L144.5 165.4 Z" fill="url(#side)"/>
 <g clip-path="url(#cps)"><rect x="120" y="100" width="110" height="165" filter="url(#ns)" opacity=".7"/></g>
 <!-- front face -->
 <path d="M222.3 108.7 L298.2 167.5 L268 252.7 L176.9 259.6 L144.5 165.4 Z" fill="url(#front)"/>
 <g clip-path="url(#cpf)"><rect x="140" y="105" width="165" height="160" filter="url(#nl)" opacity=".55"/><rect x="140" y="105" width="165" height="160" filter="url(#nd)" opacity=".95"/><path d="M176.9 259.6 L144.5 165.4 L222.3 108.7" fill="none" stroke="#5e4028" stroke-width="5" opacity=".3"/></g>
 <path d="M176.9 259.6 L144.5 165.4 L222.3 108.7" fill="none" stroke="#e8ddd0" stroke-width="1" opacity=".8"/>
 <path d="M176.9 259.6 L268 252.7" fill="none" stroke="#d8ccc0" stroke-width=".8" opacity=".6"/>
 <!-- hole -->
 <circle cx="208.5" cy="205.5" r="37" fill="#484848"/>
 <g clip-path="url(#cph)"><rect x="170" y="168" width="76" height="76" filter="url(#ng)" opacity=".25"/></g>
 <g clip-path="url(#cph)"><circle cx="176.9" cy="195.4" r="28.1" fill="#ffffff"/></g>
 <!-- path lines -->
 <path d="M105.9 119.2 L217.6 22.9 L330 140" fill="none" stroke="#b8b8b8" stroke-width=".8"/>
 <path d="M109 123.4 L218.3 30.3 L330 148" fill="none" stroke="#b8b8b8" stroke-width=".8"/>
 <rect x="216.4" y="21.7" width="2.4" height="2.4" fill="#000"/>
 <rect x="217.1" y="29.1" width="2.4" height="2.4" fill="#000"/>
 <rect x="104.7" y="118" width="2.4" height="2.4" fill="#000"/>
 <rect x="107.8" y="122.2" width="2.4" height="2.4" fill="#000"/>
</svg>
</div>

<!-- CONTEXT MENU -->
<div class="a" style="left:438px;top:139.6px;width:119px;height:265px;background:#f1f1f1;border-radius:3px;box-shadow:0 1px 5px rgba(0,0,0,.28),0 0 1px rgba(0,0,0,.2)"></div>
<div class="a" style="left:438px;top:153.6px;width:119px;height:0.8px;background:#e0e0e0"></div>
<div class="a" style="left:438px;top:179.3px;width:119px;height:0.8px;background:#e0e0e0"></div>
<div class="a" style="left:438px;top:194.8px;width:119px;height:0.8px;background:#e0e0e0"></div>
<div class="a" style="left:438px;top:239.2px;width:119px;height:0.8px;background:#e0e0e0"></div>
<div class="a" style="left:438px;top:254.8px;width:119px;height:0.8px;background:#e0e0e0"></div>
<div class="a" style="left:438px;top:270.4px;width:119px;height:0.8px;background:#e0e0e0"></div>
<div class="a" style="left:438px;top:314.3px;width:119px;height:0.8px;background:#e0e0e0"></div>
<div class="a" style="left:438px;top:339.7px;width:119px;height:0.8px;background:#e0e0e0"></div>
<div class="a" style="left:438px;top:364.9px;width:119px;height:0.8px;background:#e0e0e0"></div>
<div class="a" style="left:436px;top:383.5px;width:129px;height:11px;background:#c6c6c6"></div>
<div class="a" style="left:434.6px;top:381.9px;width:130.8px;height:13.9px;border:1.9px solid #1ba6e2"></div>
<div class="t" style="left:449.3px;top:141.6px;font-size:7.2px;line-height:9.6px;-webkit-text-stroke:0.05px currentColor;color:#303030">Add Anchor Point</div>
<div class="t" style="left:449.3px;top:157.2px;font-size:7.2px;line-height:9.6px;-webkit-text-stroke:0.05px currentColor;color:#303030">Create Vector Mask</div>
<div class="t" style="left:449.3px;top:166.8px;font-size:7.2px;line-height:9.6px;-webkit-text-stroke:0.05px currentColor;color:#303030">Delete Path</div>
<div class="t" style="left:449.3px;top:182.4px;font-size:7.2px;line-height:9.6px;-webkit-text-stroke:0.05px currentColor;color:#303030">Define Custom Shape...</div>
<div class="t" style="left:449.3px;top:198.0px;font-size:7.2px;line-height:9.6px;-webkit-text-stroke:0.05px currentColor;color:#303030">Make Selection...</div>
<div class="t" style="left:449.3px;top:207.6px;font-size:7.2px;line-height:9.6px;-webkit-text-stroke:0.05px currentColor;color:#303030">New Guides From Shape</div>
<div class="t" style="left:449.3px;top:217.2px;font-size:7.2px;line-height:9.6px;-webkit-text-stroke:0.05px currentColor;color:#303030">Fill Path...</div>
<div class="t" style="left:449.3px;top:226.8px;font-size:7.2px;line-height:9.6px;-webkit-text-stroke:0.05px currentColor;color:#303030">Stroke Path...</div>
<div class="t" style="left:449.3px;top:242.3px;font-size:7.2px;line-height:9.6px;color:#a9a9a9">Clipping Path...</div>
<div class="t" style="left:449.3px;top:257.7px;font-size:7.2px;line-height:9.6px;-webkit-text-stroke:0.05px currentColor;color:#303030">Free Transform Path</div>
<div class="t" style="left:449.3px;top:273.8px;font-size:7.2px;line-height:9.6px;color:#a9a9a9">Unite Shapes</div>
<div class="t" style="left:449.3px;top:283.0px;font-size:7.2px;line-height:9.6px;color:#a9a9a9">Subtract Front Shape</div>
<div class="t" style="left:449.3px;top:292.5px;font-size:7.2px;line-height:9.6px;color:#a9a9a9">Unite Shapes at Overlap</div>
<div class="t" style="left:449.3px;top:302.0px;font-size:7.2px;line-height:9.6px;color:#a9a9a9">Subtract Shapes at Overlap</div>
<div class="t" style="left:449.3px;top:317.7px;font-size:7.2px;line-height:9.6px;color:#a9a9a9">Copy Fill</div>
<div class="t" style="left:449.3px;top:327.2px;font-size:7.2px;line-height:9.6px;color:#a9a9a9">Copy Complete Stroke</div>
<div class="t" style="left:449.3px;top:343.1px;font-size:7.2px;line-height:9.6px;color:#a9a9a9">Paste Fill</div>
<div class="t" style="left:449.3px;top:352.4px;font-size:7.2px;line-height:9.6px;color:#a9a9a9">Paste Complete Stroke</div>
<div class="t" style="left:449.3px;top:367.8px;font-size:7.2px;line-height:9.6px;-webkit-text-stroke:0.05px currentColor;color:#303030">Isolate Layers</div>
<div class="t" style="left:449.3px;top:383.7px;font-size:7.2px;line-height:9.6px;color:#f4f4f4">Convert Path to Extrusion</div>
<div class="t" style="left:449.3px;top:393.2px;font-size:7.2px;line-height:9.6px;-webkit-text-stroke:0.05px currentColor;color:#303030">Create Constraint(s) from Path</div>

</body></html>
